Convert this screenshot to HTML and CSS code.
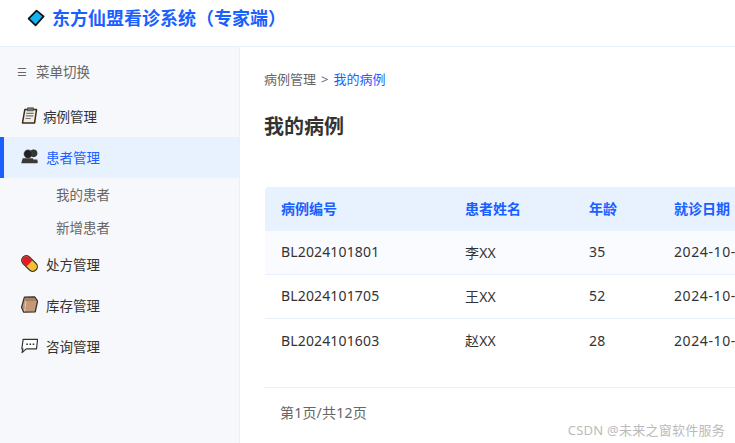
FILE: index.html
```html
<!DOCTYPE html>
<html lang="zh-CN">
<head>
<meta charset="utf-8">
<title>东方仙盟看诊系统（专家端）</title>
<link rel="stylesheet" href="styles.css">
</head>
<body>
<header class="topbar">
  <svg class="logo" viewBox="0 0 18 18" width="18" height="18"><path d="M9.6 1.6 16.6 7.4 8.6 16.4 1.6 9.6Z" fill="#12b3ee" stroke="#111" stroke-width="1.7" stroke-linejoin="round"/></svg>
  <h1 class="brand">东方仙盟看诊系统（专家端）</h1>
</header>
<div class="shell">
  <aside class="sidebar">
    <div class="toggle"><span class="toggle-icon">☰</span><span>菜单切换</span></div>
    <nav class="nav">
      <a class="nav-item first">
        <svg class="ico" viewBox="0 0 16 16"><path d="M3.6 2.4h11L12.8 15H1.4Z" fill="#f1ece2" stroke="#3d2a1a" stroke-width="1.4" stroke-linejoin="round"/><path d="M6.2 .8h5.6l-.3 2.8H5.8Z" fill="#777" stroke="#333" stroke-width=".6"/><path d="M5 6h7M4.6 8.4h7M4.2 10.8h5" stroke="#777" stroke-width="1.1"/></svg>
        <span>病例管理</span>
      </a>
      <a class="nav-item active">
        <svg class="ico" viewBox="0 0 16 16"><circle cx="11.8" cy="5" r="3.6" fill="#333"/><circle cx="6.6" cy="5.6" r="3.9" fill="#222" stroke="#666" stroke-width=".4"/><path d="M.2 14.4 1.6 9.6h9.4l.8 1.2h3.4l.6 2-.3 1.6Z" fill="#3a3a3a"/></svg>
        <span>患者管理</span>
      </a>
      <a class="sub-item">我的患者</a>
      <a class="sub-item">新增患者</a>
      <a class="nav-item">
        <svg class="ico" viewBox="0 0 16 16"><g transform="rotate(45 8 8)"><rect x="-.6" y="3.6" width="17.2" height="8.8" rx="4.4" fill="#f5c12e" stroke="#2a2a2a" stroke-width="1.1"/><path d="M8 4.1H3.8a3.9 3.9 0 0 0 0 7.8H8Z" fill="#e8192c"/></g></svg>
        <span>处方管理</span>
      </a>
      <a class="nav-item">
        <svg class="ico" viewBox="0 0 16 16"><path d="M3.2 1 12.8.8 15.6 4.8 13.4 15 2.6 15.2.5 10.8Z" fill="#c39a74" stroke="#333" stroke-width="1.2" stroke-linejoin="round"/><path d="M3.2 2 12.6 1.8 14.2 4.8 4.6 5Z" fill="#a98163"/><path d="M4.6 5 3.4 14.4" stroke="#e7d2bc" stroke-width=".9"/><rect x="1.8" y="9.8" width="1.5" height="1.9" fill="#e86a80"/></svg>
        <span>库存管理</span>
      </a>
      <a class="nav-item">
        <svg class="ico" viewBox="0 0 16 16"><path d="M2 2.2H15.6l-1 9H5L1 14.6 1.8 11.2H.8Z" fill="#fff" stroke="#333" stroke-width="1.1" stroke-linejoin="round"/><path d="M5 6.8h1.5M8 6.8h1.5M11 6.8h1.5" stroke="#333" stroke-width="1.4"/></svg>
        <span>咨询管理</span>
      </a>
    </nav>
  </aside>
  <main class="content">
    <div class="crumbs"><span>病例管理</span><span class="sep">&gt;</span><span class="current">我的病例</span></div>
    <h2 class="page-title">我的病例</h2>
    <table class="grid">
      <thead>
        <tr><th class="c1">病例编号</th><th class="c2">患者姓名</th><th class="c3">年龄</th><th class="c4">就诊日期</th></tr>
      </thead>
      <tbody>
        <tr class="alt"><td>BL2024101801</td><td>李XX</td><td>35</td><td class="date">2024-10-18</td></tr>
        <tr><td>BL2024101705</td><td>王XX</td><td>52</td><td class="date">2024-10-17</td></tr>
        <tr class="last"><td>BL2024101603</td><td>赵XX</td><td>28</td><td class="date">2024-10-16</td></tr>
      </tbody>
    </table>
    <div class="pager">第1页/共12页</div>
  </main>
</div>
<div class="watermark">CSDN @未来之窗软件服务</div>
</body>
</html>
```
FILE: styles.css
```css
* { box-sizing: border-box; }
html, body { margin: 0; height: 100%; overflow: hidden; }
body {
  background: #fff;
  color: #333;
  font-family: "Noto Sans", "Noto Sans CJK SC", sans-serif;
  font-size: 14px;
}
.topbar {
  height: 47px;
  display: flex;
  align-items: center;
  gap: 7px;
  padding: 0 0 10px 27px;
  border-bottom: 1px solid #e8f0fd;
}
.logo { flex: none; }
.brand {
  margin: 0;
  color: #1a5fff;
  font-size: 18px;
  font-weight: 700;
  line-height: 24px;
  white-space: nowrap;
}
.shell { display: flex; height: 396px; }
.sidebar {
  width: 240px;
  flex: none;
  background: #f7f8fc;
  border-right: 1px solid #e8f0fd;
  font-size: 13.5px;
}
.toggle {
  display: flex;
  align-items: center;
  gap: 8px;
  height: 49px;
  padding: 0 0 1px 17px;
  color: #666;
}
.toggle-icon { font-size: 11px; width: 11px; }
.nav { display: flex; flex-direction: column; }
.nav-item {
  display: flex;
  align-items: center;
  height: 41px;
  padding: 0 0 2px 21px;
  gap: 8px;
  color: #333;
}
.nav-item.first { gap: 5px; }
.nav-item.active {
  background: #e8f2ff;
  border-left: 4px solid #1a5fff;
  padding-left: 17px;
  color: #1a5fff;
}
.ico { width: 17px; height: 17px; flex: none; }
.sub-item {
  display: flex;
  align-items: center;
  height: 33px;
  padding: 0 0 2px 56px;
  color: #666;
}
.content {
  flex: 1;
  min-width: 0;
  overflow: hidden;
  padding: 22px 0 0 24px;
}
.crumbs {
  display: flex;
  gap: 5px;
  height: 20px;
  line-height: 20px;
  font-size: 13px;
  color: #666;
}
.current { color: #1a5fff; }
.page-title {
  margin: 24px 0 0;
  height: 74px;
  font-size: 20px;
  font-weight: 700;
  line-height: 28px;
  color: #333;
}
.grid {
  margin-left: 1px;
  width: 640px;
  table-layout: fixed;
  border-collapse: separate;
  border-spacing: 0;
}
.c1 { width: 184px; border-top-left-radius: 4px; }
.c2 { width: 124px; }
.c3 { width: 85px; }
.grid th {
  height: 44px;
  padding: 0 16px 2px;
  background: #e8f2ff;
  color: #1a5fff;
  font-size: 14px;
  font-weight: 700;
  text-align: left;
}
.grid td {
  height: 44px;
  padding: 0 16px 2px;
  border-bottom: 1px solid #e8f2ff;
  white-space: nowrap;
  letter-spacing: .15px;
}
.grid .date { letter-spacing: .6px; }
.grid .alt td { background: #f9fbff; }
.grid .last td { border-bottom: 0; }
.pager {
  margin-top: 24px;
  width: 640px;
  height: 52px;
  padding: 15px 0 0 16px;
  line-height: 20px;
  border-top: 1px solid #e8f2ff;
  color: #666;
  letter-spacing: .2px;
}
.watermark {
  position: absolute;
  right: 10px;
  top: 420px;
  font-size: 13px;
  line-height: 20px;
  color: #bbb;
  letter-spacing: .25px;
  white-space: nowrap;
}
```
